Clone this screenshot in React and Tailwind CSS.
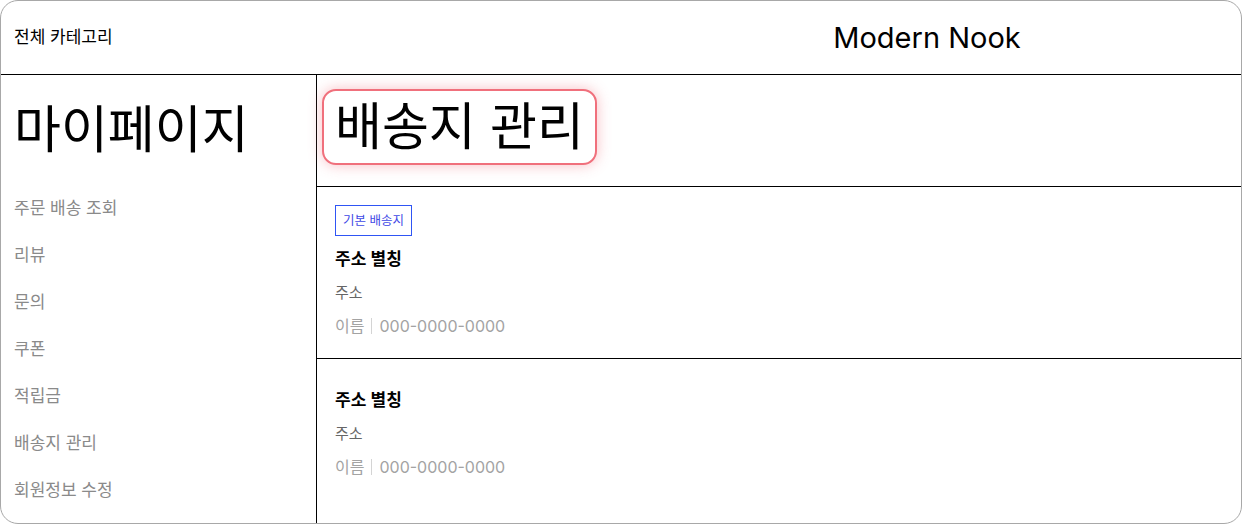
import React from 'react';

const MENU = ['주문 배송 조회', '리뷰', '문의', '쿠폰', '적립금', '배송지 관리', '회원정보 수정'];

const ADDRESSES = [
  { id: 1, isDefault: true, alias: '주소 별칭', address: '주소', name: '이름', phone: '000-0000-0000' },
  { id: 2, isDefault: false, alias: '주소 별칭', address: '주소', name: '이름', phone: '000-0000-0000' },
];

function AddressCard({ item, last }) {
  return (
    <div className={`px-[18px] pb-[20px] ${item.isDefault ? 'pt-[18px]' : 'pt-[29px]'} ${last ? '' : 'border-b border-black'}`}>
      {item.isDefault && (
        <span className="inline-block border border-[#2f55f4] px-[7px] py-[6px] text-[12.5px] leading-[17px] text-[#3f4ae6]">
          기본 배송지
        </span>
      )}
      <h3 className={`${item.isDefault ? 'mt-[11px]' : ''} text-[17px] font-semibold leading-[24px] text-black`}>
        {item.alias}
      </h3>
      <p className="mt-[11px] text-[15px] leading-[22px] text-[#666]">{item.address}</p>
      <p className="mt-[10px] flex items-center text-[16px] leading-[24px] text-[#a3a3a3]">
        <span>{item.name}</span>
        <span className="mx-[7px] h-[16px] w-px bg-[#d4d4d4]" />
        <span>{item.phone}</span>
      </p>
    </div>
  );
}

export default function App() {
  return (
    <div
      className="h-[524px] w-full overflow-hidden rounded-[18px] border border-[#a8a8a8] bg-white text-black"
      style={{ fontFamily: 'Inter, "Noto Sans CJK KR", sans-serif' }}
    >
      {/* 헤더 */}
      <header className="grid h-[74px] grid-cols-2 items-center border-b border-black">
        <div className="pl-[13px] text-[17px]">전체 카테고리</div>
        <div className="pr-[8px] text-center text-[29px] leading-none">Modern Nook</div>
      </header>

      <div className="flex h-[449px]">
        {/* 사이드바 */}
        <aside className="w-[316px] shrink-0 border-r border-black px-[13px]">
          <h1 className="mt-[25px] text-[51px] leading-[60px]">마이페이지</h1>
          <nav className="mt-[36px] flex flex-col gap-[22px]">
            {MENU.map((m) => (
              <a key={m} href="#" className="text-[17px] leading-[25px] text-[#8a8a8a]">
                {m}
              </a>
            ))}
          </nav>
        </aside>

        {/* 본문 */}
        <main className="flex-1">
          <section className="h-[112px] border-b border-black pl-[5px] pt-[14px]">
            <h2 className="inline-block rounded-[14px] border-2 border-[#f0707c] bg-white px-[11px] text-[51px] leading-[72px] shadow-[0_0_14px_rgba(240,112,124,0.45)]">
              배송지 관리
            </h2>
          </section>
          {ADDRESSES.map((a, i) => (
            <AddressCard key={a.id} item={a} last={i === ADDRESSES.length - 1} />
          ))}
        </main>
      </div>
    </div>
  );
}
